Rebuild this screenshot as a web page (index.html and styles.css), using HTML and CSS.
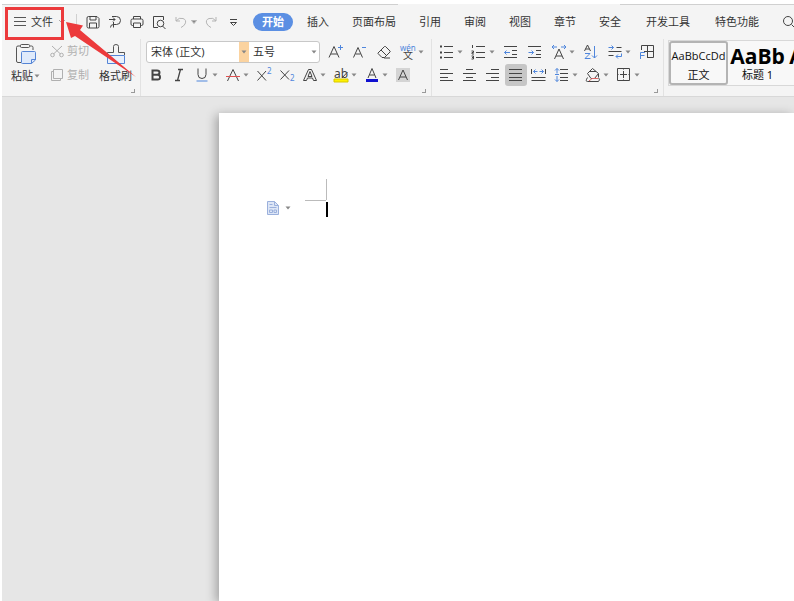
FILE: index.html
```html
<!DOCTYPE html>
<html lang="zh-CN">
<head>
    <meta charset="UTF-8">
    <meta name="viewport" content="width=device-width, initial-scale=1.0">
    <title>文字</title>
    <link rel="stylesheet" href="styles.css">
</head>
<body>
    <!-- shared drop-down arrow -->
    <svg class="defs" width="0" height="0">
        <symbol id="caret" viewBox="0 0 6 4"><path d="M0.5 0.5h5L3 3.5z" fill="#888"/></symbol>
    </svg>

    <div class="app">
        <nav class="menubar">
            <button class="file">
                <svg width="12" height="12" viewBox="0 0 12 12"><path d="M0 1.5h12M0 5.5h12M0 9.5h12" stroke="#555"/></svg>
                文件
                <svg width="8" height="6" viewBox="0 0 8 6"><path d="M1 1l3 3 3-3" stroke="#aaa"/></svg>
            </button>
            <div class="quick">
                <button class="icon" aria-label="保存"><svg viewBox="0 0 16 16"><path d="M3.500 2.500h8.500l2 2v8q0 1.500-1.500 1.500h-9q-1.500 0-1.500-1.500v-8.500q0-1.500 1.500-1.500zM5 2.500v3.500h6v-3.500M4.500 14v-5h7v5"/></svg></button>
                <button class="icon" aria-label="输出"><svg viewBox="0 0 16 16"><path d="M5 2.500h4.500a3.800 3.800 0 0 1 0 8H6.500M2 5.500h6M6 3.500l2 2-2 2M6.500 10.500q-3 0-3 3M6.500 8v5.500"/></svg></button>
                <button class="icon" aria-label="打印"><svg viewBox="0 0 16 16"><path d="M4.500 5v-2.500h7V5M4.500 11.500h-1q-1.500 0-1.500-1.500V6.500q0-1.500 1.500-1.500h9q1.500 0 1.500 1.500v3.500q0 1.500-1.500 1.500h-1M4.500 9h7v4.500h-7z"/></svg></button>
                <button class="icon" aria-label="打印预览"><svg viewBox="0 0 16 16"><path d="M7 13.500H2.500v-11h10V6M11.500 12l3 3"/><circle cx="9.500" cy="9.500" r="3.300"/></svg></button>
                <button class="icon wide faded" aria-label="撤销"><svg viewBox="0 0 16 16"><path d="M3 3v4h4M3 7q3-4 7-2.500t2 5.500q-1 2-4 3.500"/></svg><svg class="caret"><use href="#caret"/></svg></button>
                <button class="icon faded" aria-label="恢复"><svg viewBox="0 0 16 16"><path d="M13 3v4H9M13 7q-3-4-7-2.500t-2 5.500q1 2 4 3.500"/></svg></button>
                <button class="icon" aria-label="更多"><svg viewBox="0 0 16 16"><path d="M5 5.500h7M5.500 8.500h6L8.500 11.500z"/></svg></button>
            </div>
            <div class="tabs">
                <button class="tab active">开始</button>
                <button class="tab">插入</button>
                <button class="tab">页面布局</button>
                <button class="tab">引用</button>
                <button class="tab">审阅</button>
                <button class="tab">视图</button>
                <button class="tab">章节</button>
                <button class="tab">安全</button>
                <button class="tab extra">开发工具</button>
                <button class="tab extra">特色功能</button>
                <button class="icon" aria-label="查找"><svg viewBox="0 0 16 16"><circle cx="6" cy="7" r="4.500"/><path d="M9.500 10.500l4 4"/></svg></button>
            </div>
        </nav>

        <div class="ribbon">
            <section class="group clipboard">
                <button class="big">
                    <svg width="22" height="22" viewBox="0 0 22 22"><path d="M6 3H3q-1.500 0-1.500 1.500v13.500q0 1.500 1.500 1.500h3M15 3h1.500q1.500 0 1.500 1.500V7" stroke="#555"/><rect x="5.500" y="1.500" width="9" height="3" rx="1" stroke="#555"/><path d="M7.500 8.500h12q1 0 1 1v7.500l-4 3.500H7.500q-1 0-1-1v-10q0-1 1-1z" fill="#dfeafb" stroke="#5585d6"/><path d="M20.500 16.500h-4v4" stroke="#5585d6"/></svg>
                    <span>粘贴 <svg class="caret"><use href="#caret"/></svg></span>
                </button>
                <div class="stack">
                    <button class="small"><svg width="14" height="14" viewBox="0 0 14 14"><path d="M2 2l8.500 8M12 2L3.500 10"/><circle cx="2.500" cy="11" r="1.800"/><circle cx="11.500" cy="11" r="1.800"/></svg>剪切</button>
                    <button class="small"><svg width="14" height="14" viewBox="0 0 14 14"><path d="M3.500 1.500h9v9h-9zM3.500 3.500h-2v9h9v-2"/></svg>复制</button>
                </div>
                <button class="big">
                    <svg width="22" height="22" viewBox="0 0 22 22"><path d="M2.500 12V9.500h6V3.500q0-2 2.500-2t2.500 2v6h6V12" stroke="#555"/><path d="M2.500 12.500h17v8h-17z" fill="#e8f0fc" stroke="#5585d6"/></svg>
                    <span>格式刷</span>
                </button>
                <i class="launcher"></i>
            </section>

            <section class="group font">
                <div class="row">
                    <div class="combos">
                        <label class="combo family"><select aria-label="字体"><option>宋体 (正文)</option></select><svg class="caret"><use href="#caret"/></svg></label>
                        <label class="combo size"><select aria-label="字号"><option>五号</option></select><svg class="caret"><use href="#caret"/></svg></label>
                    </div>
                    <button class="icon" aria-label="增大字号"><svg viewBox="0 0 16 16"><path d="M1 13.500L6 2.500 11 13.500M3 10h6"/><path class="blue" d="M10 3.500h5M12.500 1v5"/></svg></button>
                    <button class="icon" aria-label="减小字号"><svg viewBox="0 0 16 16"><path d="M1.500 13.500L6 3.500 10.500 13.500M3.500 10h5"/><path class="blue" d="M10 3.500h4"/></svg></button>
                    <button class="icon" aria-label="清除格式"><svg viewBox="0 0 16 16"><path d="M2 9l6.500-6.500q.5-.5 1 0L14 7q.5.500 0 1l-5.500 5.500H6L2 9.500zM5 6l5.500 5.500M8 14h6"/></svg></button>
                    <button class="icon wide" aria-label="拼音指南"><svg viewBox="0 0 16 16"><text class="blue-text" x="0" y="7" font-size="8">wén</text><text x="3" y="15" font-size="10">文</text></svg><svg class="caret"><use href="#caret"/></svg></button>
                </div>
                <div class="row tight">
                    <button class="icon" aria-label="加粗"><svg viewBox="0 0 16 16"><path d="M4.500 3.500h4.500q2.500 0 2.500 2t-2.500 2.300h-4.500zM4.500 7.800h5q2.500 0 2.500 2.400t-2.500 2.300h-5z" stroke-width="2"/></svg></button>
                    <button class="icon" aria-label="倾斜"><svg viewBox="0 0 16 16"><path d="M7 2.500h5M4 13.500h5M9.500 2.500l-3 11" stroke-width="1.300"/></svg></button>
                    <button class="icon wide" aria-label="下划线"><svg viewBox="0 0 16 16"><path d="M4 1.500v6q0 4 4 4t4-4v-6"/><path class="blue" d="M2.500 14h11"/></svg><svg class="caret"><use href="#caret"/></svg></button>
                    <button class="icon wide" aria-label="删除线"><svg viewBox="0 0 16 16"><path d="M2.500 14L8 2.500 13.500 14"/><path d="M1 9.500h14" stroke="#e05050"/></svg><svg class="caret"><use href="#caret"/></svg></button>
                    <button class="icon" aria-label="上标"><svg viewBox="0 0 16 16"><path d="M1.500 4l8.500 9.500M10 4L1.500 13.500"/><text class="blue-text" x="11" y="7" font-size="8">2</text></svg></button>
                    <button class="icon" aria-label="下标"><svg viewBox="0 0 16 16"><path d="M1.500 3.500l8.500 9M10 3.500L1.500 12.500"/><text class="blue-text" x="11" y="14" font-size="8">2</text></svg></button>
                    <button class="icon wide" aria-label="文字效果"><svg viewBox="0 0 16 16"><path d="M1.500 13.500L6.500 2.500h3L14.500 13.500h-3l-1-2.500h-5l-1 2.500zM6 9.500l2-5 2 5z"/></svg><svg class="caret"><use href="#caret"/></svg></button>
                    <button class="icon wide" aria-label="突出显示"><svg viewBox="0 0 16 16"><path d="M1 12h14v3H1z" fill="#fff200" stroke="#d8c800"/><text x="1" y="11" font-size="12">ab</text><path d="M14.500 5L9 11"/></svg><svg class="caret"><use href="#caret"/></svg></button>
                    <button class="icon wide" aria-label="字体颜色"><svg viewBox="0 0 16 16"><path d="M4 11l4-9.500L12 11M5.500 8h5"/><path d="M2 13.500h12" stroke="#1010d0" stroke-width="3"/></svg><svg class="caret"><use href="#caret"/></svg></button>
                    <button class="icon" aria-label="字符底纹"><svg viewBox="0 0 16 16"><path d="M1 1h14v14H1z" fill="#d4d4d4" stroke="none"/><path d="M3.500 13L8 3l4.500 10M5 10h6"/></svg></button>
                </div>
                <i class="launcher"></i>
            </section>

            <section class="group paragraph">
                <div class="row">
                    <button class="icon wide" aria-label="项目符号"><svg viewBox="0 0 16 16"><path d="M5 2.500h9M5 8.500h9M5 13.500h9"/><path d="M1 2.500h2M1 8.500h2M1 13.500h2" stroke-width="2"/></svg><svg class="caret"><use href="#caret"/></svg></button>
                    <button class="icon wide" aria-label="编号"><svg viewBox="0 0 16 16"><path d="M5 2.500h9M5 8.500h9M5 13.500h9M1.500 1v3M.5 7h2v1.500H1V10h2M.5 12h2v3h-2M1 13.500h1"/></svg><svg class="caret"><use href="#caret"/></svg></button>
                    <button class="icon" aria-label="减少缩进"><svg viewBox="0 0 16 16"><path d="M1 2.500h13M9 6.500h5M9 10.500h5M1 13.500h13"/><path class="blue" d="M1.500 8.500h5.500M3.500 6.500l-2 2 2 2"/></svg></button>
                    <button class="icon" aria-label="增加缩进"><svg viewBox="0 0 16 16"><path d="M1 2.500h13M9 6.500h5M9 10.500h5M1 13.500h13"/><path class="blue" d="M1.500 8.500h5M4.500 6.500l2 2-2 2"/></svg></button>
                    <button class="icon wide" aria-label="字符缩放"><svg viewBox="0 0 16 16"><path d="M3.500 15L8 5l4.500 10M5 12h6"/><path class="blue" d="M1 3h5M3 1L1 3l2 2M10 3h5M13 1l2 2-2 2"/></svg><svg class="caret"><use href="#caret"/></svg></button>
                    <button class="icon" aria-label="排序"><svg viewBox="0 0 16 16"><path d="M1.500 7L4.500 1l3 6M2.500 5h4"/><path class="blue" d="M2 9.500h5l-5 5h5.500M11.500 2v12M9 11.500l2.500 2.500 2.500-2.500"/></svg></button>
                    <button class="icon wide" aria-label="显示段落标记"><svg viewBox="0 0 16 16"><path d="M9.500 3.500h5M1.500 7.500h13M1.500 11.500h5"/><path class="blue" d="M1.500 3.500h5M4.500 1.500l2 2-2 2M14.500 9.500v3H9M11 10.500l-2 2 2 2"/></svg><svg class="caret"><use href="#caret"/></svg></button>
                    <button class="icon" aria-label="制表位"><svg viewBox="0 0 16 16"><path d="M2.500 6V1.500h12v12H8M8.500 1.500v12M5 7.500h9.500"/><path class="blue" d="M1.500 15V8.500H6M1.500 11.500h4"/></svg></button>
                </div>
                <div class="row tight">
                    <button class="icon" aria-label="左对齐"><svg viewBox="0 0 16 16"><path d="M1 2.500h8M1 6.500h13M1 10.500h8M1 13.500h13"/></svg></button>
                    <button class="icon" aria-label="居中"><svg viewBox="0 0 16 16"><path d="M4 2.500h7M1 6.500h13M4 10.500h7M1 13.500h13"/></svg></button>
                    <button class="icon" aria-label="右对齐"><svg viewBox="0 0 16 16"><path d="M6 2.500h8M1 6.500h13M6 10.500h8M1 13.500h13"/></svg></button>
                    <button class="icon pressed" aria-label="两端对齐"><svg viewBox="0 0 16 16"><path d="M1 2.500h13M1 6.500h13M1 10.500h13M1 13.500h13"/></svg></button>
                    <button class="icon" aria-label="分散对齐"><svg viewBox="0 0 16 16"><path d="M.5 10.500h14M.5 13.500h14M.5 2v5M14.500 2v5"/><path class="blue" d="M2.500 4.500h4M4.500 2.500l-2 2 2 2M8.500 4.500h4M10.500 2.500l2 2-2 2"/></svg></button>
                    <button class="icon wide" aria-label="行距"><svg viewBox="0 0 16 16"><path d="M6 2.500h8M6 6.500h8M6 10.500h8M6 13.500h8"/><path class="blue" d="M3 1.500v5M1 3.500l2-2 2 2M3 9v5.500M1 12.500l2 2 2-2M1 7.500h4"/></svg><svg class="caret"><use href="#caret"/></svg></button>
                    <button class="icon wide" aria-label="底纹颜色"><svg viewBox="0 0 16 16"><path d="M2.500 6.500L7.500 1.500l6 5-4 5H6zM4 4.500h7"/><path d="M2.500 10.500q-2.500 4 0 4h11q2-1.500 0-4M13.500 7v3"/><path d="M4 14l3-2.500h6" stroke="#d66"/></svg><svg class="caret"><use href="#caret"/></svg></button>
                    <button class="icon wide" aria-label="边框"><svg viewBox="0 0 16 16"><path d="M1.500 1.500h12v12h-12zM7.500 4v7M4 7.500h7M1.500 7.500h1M12.500 7.500h1M7.500 1.500v1M7.500 12.500v1"/></svg><svg class="caret"><use href="#caret"/></svg></button>
                </div>
                <i class="launcher"></i>
            </section>

            <section class="gallery">
                <button class="style selected"><span class="sample">AaBbCcDd</span><span>正文</span></button>
                <button class="style"><span class="sample heading">AaBb</span><span>标题 1</span></button>
                <button class="style"><span class="sample heading">AaBb</span><span>标题 2</span></button>
            </section>
        </div>

        <main class="workspace">
            <div class="page">
                <button class="paste-tag" aria-label="页面选项">
                    <svg width="12" height="14" viewBox="0 0 12 14"><path d="M.5.500h7l4 4v9H.5z" fill="#dde6f6" stroke="#9bb0dc"/><path d="M7.500.500v4h4M2.500 3.500h3M2.500 6.500h7M2.500 9h3v2.500h-3zM7 9h2.500v2.500H7z" fill="none" stroke="#9bb0dc"/></svg>
                    <svg class="caret"><use href="#caret"/></svg>
                </button>
                <svg class="corner" width="24" height="40" viewBox="0 0 24 40"><path d="M21.500 0v21M0 21.500h21" stroke="#bbb" fill="none"/><path d="M22 23v15" stroke="#000" stroke-width="2"/></svg>
            </div>
        </main>

        <!-- callout over the file menu -->
        <svg class="callout" width="140" height="84" viewBox="0 0 140 84"><rect x="6.500" y="8.500" width="56" height="30" fill="none" stroke="#ec3a3c" stroke-width="3"/><path d="M66 22L83 25.500 80 30 136 77 75 36 71 38z" fill="#ec3a3c"/></svg>
    </div>
</body>
</html>
```
FILE: styles.css
```css
* {
    box-sizing: border-box;
}

body {
    margin: 0;
    padding: 4px 0 0 2px;
    background: #fff;
    color: #333;
    font: 11px/16px "Noto Sans", "Noto Sans CJK SC", sans-serif;
    overflow: hidden;
}

button {
    margin: 0;
    padding: 0;
    border: 0;
    background: none;
    color: inherit;
    font: inherit;
    white-space: nowrap;
}

svg {
    display: block;
    fill: none;
    flex: none;
}

.defs {
    position: absolute;
}

.app {
    display: flex;
    flex-direction: column;
    height: calc(100vh - 4px);
    overflow: hidden;
}

/* top menu, the hairline on top is broken in the middle */
.menubar {
    display: flex;
    align-items: center;
    height: 35px;
    flex: none;
    padding: 1px 0 0 12px;
    background: #f4f4f4 linear-gradient(to right, #d0d0d0 50%, #f4f4f4 50%, #f4f4f4 78%, #d0d0d0 78%) top / 100% 1px no-repeat;
}

.file {
    display: flex;
    align-items: center;
    gap: 5px;
    padding-right: 10px;
    border-right: 1px solid #d0d0d0;
}

.quick {
    display: flex;
    gap: 6px;
    padding-left: 8px;
}

.tabs {
    display: flex;
    align-items: center;
    gap: 23px;
    padding-left: 12px;
}

.tab.active {
    margin-right: -9px;
    padding: 1px 9px;
    border-radius: 9px;
    background: #5b8fe3;
    color: #fff;
    font-weight: bold;
}

.tab.extra {
    margin-left: 2px;
}

/* icon buttons */
.icon {
    display: flex;
    align-items: center;
    gap: 2px;
    flex: none;
}

.icon svg {
    width: 16px;
    height: 16px;
    stroke: #444;
    overflow: visible;
}

.icon svg text {
    fill: #444;
    stroke: none;
}

.icon svg .blue {
    stroke: #4f86dc;
}

.icon svg .blue-text {
    fill: #4f86dc;
}

.icon.faded svg {
    stroke: #b4b4b4;
}

.icon.pressed {
    margin: -3px;
    padding: 3px;
    border-radius: 3px;
    background: #c6c6c6;
}

.caret,
.icon .caret {
    width: 6px;
    height: 4px;
    stroke: none;
}

/* ribbon */
.ribbon {
    display: flex;
    height: 58px;
    flex: none;
    border-bottom: 1px solid #d8d8d8;
    background: #f4f4f4;
}

.group {
    position: relative;
    flex: none;
    border-right: 1px solid #e2e2e2;
}

.launcher {
    position: absolute;
    right: 5px;
    bottom: 3px;
    width: 4px;
    height: 4px;
    border: solid #999;
    border-width: 0 1px 1px 0;
}

.clipboard {
    display: flex;
    gap: 10px;
    padding: 4px 8px 0 9px;
}

.big {
    display: flex;
    flex-direction: column;
    align-items: center;
    align-self: flex-start;
    gap: 3px;
}

.big span {
    display: flex;
    align-items: center;
    gap: 1px;
}

.stack {
    display: flex;
    flex-direction: column;
    gap: 8px;
}

.small {
    display: flex;
    align-items: center;
    gap: 3px;
    color: #b0b0b0;
}

.small svg {
    stroke: #b0b0b0;
}

.font {
    padding: 2px 7px 0 5px;
}

.paragraph {
    padding: 2px 8px 0 7px;
}

.row {
    display: flex;
    align-items: center;
    gap: 8px;
    height: 22px;
}

.row.tight {
    gap: 7px;
    height: 24px;
}

.font .tight {
    padding-left: 2px;
}

.combos {
    display: flex;
    width: 174px;
    height: 22px;
    border: 1px solid #c8c8c8;
    border-radius: 3px;
    background: #fff;
    overflow: hidden;
}

.combo {
    position: relative;
    display: flex;
}

.combo.family {
    width: 102px;
}

.combo.size {
    flex: 1;
}

.combo select {
    width: 100%;
    padding: 0 4px;
    border: 0;
    background: transparent;
    color: #333;
    font: inherit;
    appearance: none;
}

.combo .caret {
    position: absolute;
    right: 2px;
    top: 8px;
}

.combo.family select {
    border-right: 10px solid #fbd3a0;
}

/* style gallery */
.gallery {
    display: flex;
    flex: 1;
    height: 46px;
    margin: 1px 0 0 4px;
    border: 1px solid #d8d8d8;
    border-right: 0;
    background: #f8f8f8;
    overflow: hidden;
}

.style {
    display: flex;
    flex-direction: column;
    align-items: center;
    width: 59px;
    flex: none;
    padding-top: 2px;
    color: #111;
}

.style.selected {
    border: 2px solid #b4b4b4;
    border-radius: 3px;
    padding-top: 0;
}

.sample {
    height: 24px;
    font: 11px/26px "Open Sans", sans-serif;
}

.sample.heading {
    color: #000;
    font-size: 21px;
    font-weight: bold;
}

/* document */
.workspace {
    display: flex;
    flex: 1;
    padding: 16px 0 0 217px;
    background: #e6e6e6;
    overflow: hidden;
}

.page {
    display: flex;
    align-items: flex-start;
    gap: 14px;
    flex: 1;
    padding: 66px 0 0 48px;
    background: #fff;
    box-shadow: -3px 2px 10px rgba(0, 0, 0, 0.3);
}

.paste-tag {
    display: flex;
    align-items: center;
    gap: 6px;
    padding-top: 22px;
}

.callout {
    position: absolute;
    left: 0;
    top: 0;
    pointer-events: none;
}
```
